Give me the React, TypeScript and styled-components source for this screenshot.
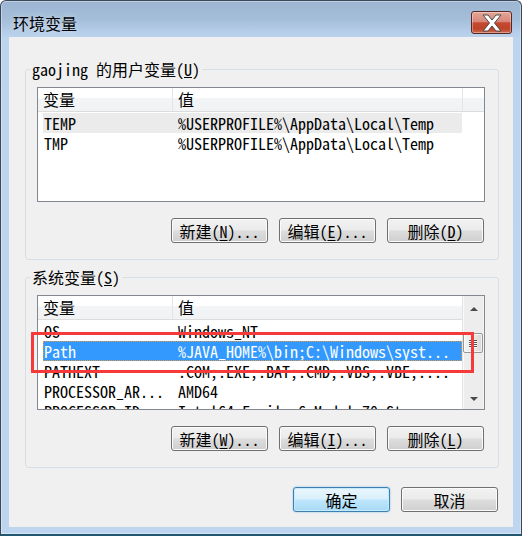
import React from "react";
import styled, { createGlobalStyle, css } from "styled-components";

const MONO = `"Noto Sans Mono CJK SC", "Noto Sans CJK SC", "Liberation Mono", monospace`;
const UI = `"Noto Sans CJK SC", "Noto Sans", sans-serif`;

const GlobalStyle = createGlobalStyle`
  html, body { margin: 0; padding: 0; background: #ffffff; }
  body { font-family: ${MONO}; font-size: 16px; color: #000; }
  *, *::before, *::after { box-sizing: border-box; }
`;

const Window = styled.div`
  width: 522px;
  height: 536px;
  display: flex;
  flex-direction: column;
  border: 1px solid #3a4859;
  border-bottom: 2px solid #23566f;
  border-radius: 6px 6px 0 0;
  background: linear-gradient(
    180deg,
    #9cb6d3 0px,
    #a4bdd9 18px,
    #b4cce7 30px,
    #bcd4ee 38px,
    #bdd5ee 100%
  );
  box-shadow: inset 0 0 0 1px rgba(255, 255, 255, 0.35);
`;

const TitleBar = styled.div`
  height: 36px;
  flex: none;
  display: flex;
  justify-content: space-between;
  align-items: flex-start;
  padding: 0 9px 0 12px;
`;

const Title = styled.div`
  margin-top: 14px;
  font-family: ${UI};
  font-size: 16px;
  line-height: 16px;
  color: #000;
  text-shadow: 0 0 6px rgba(255, 255, 255, 0.6);
`;

const CloseButton = styled.button`
  margin-top: 10px;
  width: 41px;
  height: 23px;
  padding: 0;
  display: flex;
  align-items: center;
  justify-content: center;
  border: 1px solid #5a2620;
  border-radius: 3px;
  background: linear-gradient(
    180deg,
    #e3a597 0%,
    #d8887a 45%,
    #c44a31 52%,
    #bf4329 80%,
    #cc6a52 100%
  );
  box-shadow: inset 0 0 0 1px rgba(255, 255, 255, 0.35);
`;

const Client = styled.div`
  flex: 1;
  margin: 0 8px 7px 8px;
  background: #f0f0f0;
  padding: 23px 14px 0 16px;
  display: flex;
  flex-direction: column;
`;

const Group = styled.fieldset<{ $gap?: number }>`
  margin: ${(p) => p.$gap ?? 0}px 0 0 0;
  padding: 9px 13px 16px 11px;
  border: 1px solid #d5dfe5;
  border-radius: 3px;
  min-width: 0;
`;

const Legend = styled.legend`
  padding: 0 2px;
  margin-left: -7px;
  font-size: 16px;
  line-height: 18px;
  height: 18px;
  white-space: pre;
`;

const ListView = styled.div`
  position: relative;
  width: 448px;
  height: 115px;
  border: 1px solid #828790;
  background: #ffffff;
  display: flex;
`;

const ListPane = styled.div`
  flex: 1;
  min-width: 0;
  overflow: hidden;
`;

const Header = styled.div`
  display: flex;
  height: 24px;
  border-bottom: 1px solid #dcdcdc;
  background: linear-gradient(180deg, #ffffff 0%, #ffffff 42%, #f3f4f6 43%, #f1f2f4 100%);
`;

const HeaderCell = styled.div<{ $w: number }>`
  flex: none;
  width: ${(p) => p.$w}px;
  padding-left: 5px;
  border-right: 1px solid #e3e5e8;
  line-height: 23px;
  white-space: nowrap;
`;

const Rows = styled.div`
  padding: 1px 0 0 5px;
`;

const Row = styled.div<{ $state?: "hover" | "selected" }>`
  display: flex;
  width: 419px;
  height: 20px;
  line-height: 20px;
  white-space: pre;
  color: #000;
  ${(p) =>
    p.$state === "hover" &&
    css`
      background: #ebebeb;
    `}
  ${(p) =>
    p.$state === "selected" &&
    css`
      background: #3399ff;
      color: #ffffff;
      outline: 1px dotted #e39a3a;
      outline-offset: -1px;
    `}
`;

const Cell = styled.div<{ $w?: number }>`
  ${(p) => (p.$w ? `flex: none; width: ${p.$w}px; padding-left: 1px;` : "flex: 1; min-width: 0;")}
`;

const ScrollBar = styled.div`
  flex: none;
  width: 22px;
  display: flex;
  flex-direction: column;
  background: #ededed;
  border-left: 1px solid #e2e2e2;
  box-shadow: inset 1px 0 #fafafa, inset -1px 0 #f6f6f6;
`;

const ScrollArrow = styled.div<{ $dir: "up" | "down" }>`
  flex: none;
  height: 21px;
  display: flex;
  justify-content: center;
  align-items: center;
  padding-top: ${(p) => (p.$dir === "up" ? 4 : 0)}px;
  &::after {
    content: "";
    width: 0;
    height: 0;
    border-left: 4px solid transparent;
    border-right: 4px solid transparent;
    ${(p) =>
      p.$dir === "up"
        ? "border-bottom: 4px solid #4a4a4a;"
        : "border-top: 4px solid #4a4a4a;"}
  }
`;

const Track = styled.div`
  flex: 1;
`;

const Thumb = styled.div<{ $top: number }>`
  width: 20px;
  height: 20px;
  margin: ${(p) => p.$top}px 0 0 0;
  border: 1px solid #979797;
  border-radius: 2px;
  background: linear-gradient(90deg, #f4f4f4 0%, #e9e9e9 50%, #d9d9d9 100%);
  box-shadow: inset 0 0 0 1px rgba(255, 255, 255, 0.7);
  display: flex;
  flex-direction: column;
  align-items: center;
  justify-content: center;
  gap: 1px;
`;

const Grip = styled.span`
  width: 8px;
  height: 1px;
  background: #555555;
  box-shadow: 0 1px #ffffff;
`;

const Annotation = styled.div`
  position: absolute;
  left: -7px;
  top: 36px;
  width: 443px;
  height: 41px;
  border: 3px solid #f63a3a;
  pointer-events: none;
`;

const ButtonRow = styled.div`
  display: flex;
  justify-content: flex-end;
  gap: 11px;
  margin-top: 16px;
  padding-right: 1px;
`;

const DialogButtons = styled(ButtonRow)`
  margin-top: 19px;
`;

const Button = styled.button<{ $default?: boolean }>`
  width: 97px;
  height: 25px;
  padding: 0;
  font-family: ${MONO};
  font-size: 16px;
  line-height: 1;
  color: #000;
  white-space: pre;
  border: 1px solid #707070;
  border-radius: 3px;
  background: linear-gradient(180deg, #f2f2f2 0%, #ebebeb 48%, #dddddd 52%, #cfcfcf 100%);
  box-shadow: inset 0 0 0 1px #fbfbfb;
  ${(p) =>
    p.$default &&
    css`
      border-color: #3c7fb1;
      background: linear-gradient(180deg, #eaf6fd 0%, #d9f0fc 48%, #bee6fd 52%, #a7d9f5 100%);
      box-shadow: inset 0 0 0 1px #c6e9fb, 0 0 2px rgba(60, 160, 220, 0.6);
    `}
  u {
    text-decoration: underline;
    text-underline-offset: 2px;
  }
`;

type Variable = { name: string; value: string; state?: "hover" | "selected" };

const userVars: Variable[] = [
  { name: "TEMP", value: "%USERPROFILE%\\AppData\\Local\\Temp", state: "hover" },
  { name: "TMP", value: "%USERPROFILE%\\AppData\\Local\\Temp" },
];

const systemVars: Variable[] = [
  { name: "OS", value: "Windows_NT" },
  { name: "Path", value: "%JAVA_HOME%\\bin;C:\\Windows\\syst...", state: "selected" },
  { name: "PATHEXT", value: ".COM;.EXE;.BAT;.CMD;.VBS;.VBE;...." },
  { name: "PROCESSOR_AR...", value: "AMD64" },
  { name: "PROCESSOR_ID", value: "Intel64 Family 6 Model 70 St..." },
];

function VarList({ items }: { items: Variable[] }) {
  return (
    <ListPane>
      <Header>
        <HeaderCell $w={135}>变量</HeaderCell>
        <HeaderCell $w={290}>值</HeaderCell>
      </Header>
      <Rows>
        {items.map((v) => (
          <Row key={v.name} $state={v.state}>
            <Cell $w={135}>{v.name}</Cell>
            <Cell>{v.value}</Cell>
          </Row>
        ))}
      </Rows>
    </ListPane>
  );
}

function Actions({ keys }: { keys: [string, string, string] }) {
  return (
    <ButtonRow>
      <Button>
        新建(<u>{keys[0]}</u>)...
      </Button>
      <Button>
        编辑(<u>{keys[1]}</u>)...
      </Button>
      <Button>
        删除(<u>{keys[2]}</u>)
      </Button>
    </ButtonRow>
  );
}

export default function App() {
  return (
    <>
      <GlobalStyle />
      <Window>
        <TitleBar>
          <Title>环境变量</Title>
          <CloseButton aria-label="关闭">
            <svg width="20" height="18" viewBox="-1 -1 20 18">
              <polygon
                points="0,0 5,0 9,5 13,0 18,0 11.5,8 18,16 13,16 9,11 5,16 0,16 6.5,8"
                fill="#ffffff"
                stroke="#4a4a4a"
                strokeWidth="1"
                strokeLinejoin="round"
              />
            </svg>
          </CloseButton>
        </TitleBar>
        <Client>
          <Group>
            <Legend>
              gaojing 的用户变量(<u>U</u>)
            </Legend>
            <ListView>
              <VarList items={userVars} />
            </ListView>
            <Actions keys={["N", "E", "D"]} />
          </Group>
          <Group $gap={8}>
            <Legend>
              系统变量(<u>S</u>)
            </Legend>
            <ListView>
              <VarList items={systemVars} />
              <ScrollBar>
                <ScrollArrow $dir="up" />
                <Track>
                  <Thumb $top={16}>
                    <Grip />
                    <Grip />
                    <Grip />
                    <Grip />
                  </Thumb>
                </Track>
                <ScrollArrow $dir="down" />
              </ScrollBar>
              <Annotation />
            </ListView>
            <Actions keys={["W", "I", "L"]} />
          </Group>
          <DialogButtons>
            <Button $default>确定</Button>
            <Button>取消</Button>
          </DialogButtons>
        </Client>
      </Window>
    </>
  );
}
